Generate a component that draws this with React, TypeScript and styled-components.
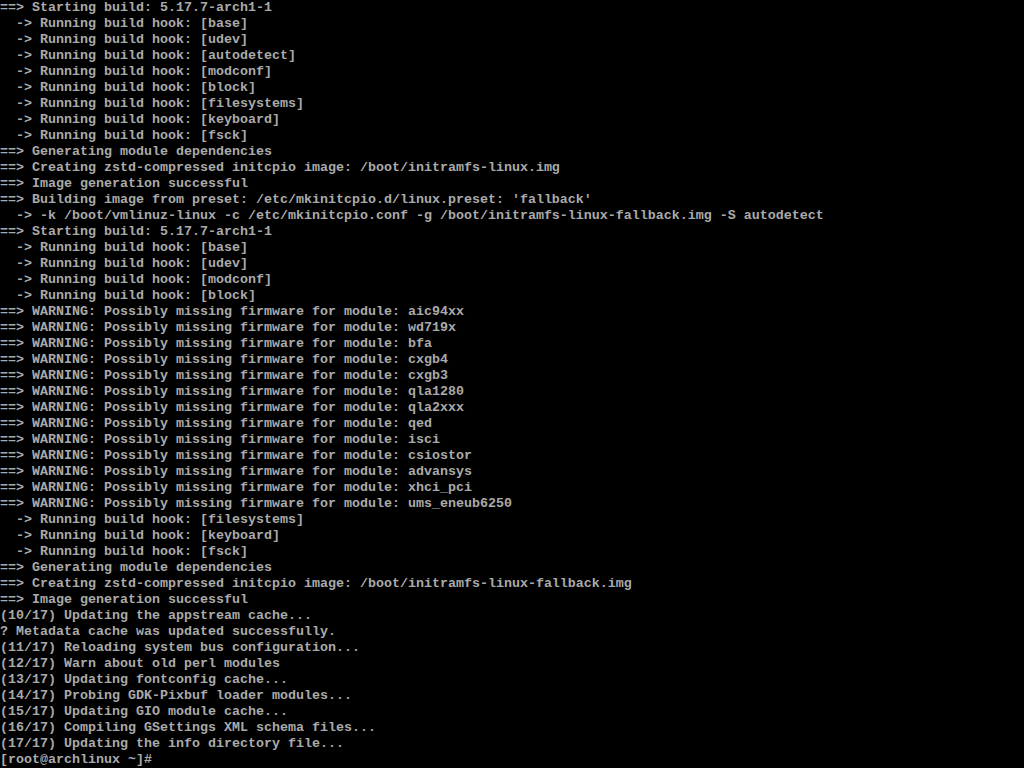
import React from "react";
import styled, { createGlobalStyle } from "styled-components";

const Global = createGlobalStyle`
  html, body { margin: 0; padding: 0; background: #000; }
  body { overflow: hidden; }
`;

const Screen = styled.div`
  width: 1024px;
  height: 768px;
  background: #000;
  display: flex;
  flex-direction: column;
  overflow: hidden;
`;

const Line = styled.div`
  height: 16px;
  line-height: 16px;
  font-family: "Liberation Mono", "DejaVu Sans Mono", monospace;
  font-size: 13.333px;
  font-weight: bold;
  color: #aaaaaa;
  white-space: pre;
`;

const lines = [
  "==> Starting build: 5.17.7-arch1-1",
  "  -> Running build hook: [base]",
  "  -> Running build hook: [udev]",
  "  -> Running build hook: [autodetect]",
  "  -> Running build hook: [modconf]",
  "  -> Running build hook: [block]",
  "  -> Running build hook: [filesystems]",
  "  -> Running build hook: [keyboard]",
  "  -> Running build hook: [fsck]",
  "==> Generating module dependencies",
  "==> Creating zstd-compressed initcpio image: /boot/initramfs-linux.img",
  "==> Image generation successful",
  "==> Building image from preset: /etc/mkinitcpio.d/linux.preset: 'fallback'",
  "  -> -k /boot/vmlinuz-linux -c /etc/mkinitcpio.conf -g /boot/initramfs-linux-fallback.img -S autodetect",
  "==> Starting build: 5.17.7-arch1-1",
  "  -> Running build hook: [base]",
  "  -> Running build hook: [udev]",
  "  -> Running build hook: [modconf]",
  "  -> Running build hook: [block]",
  "==> WARNING: Possibly missing firmware for module: aic94xx",
  "==> WARNING: Possibly missing firmware for module: wd719x",
  "==> WARNING: Possibly missing firmware for module: bfa",
  "==> WARNING: Possibly missing firmware for module: cxgb4",
  "==> WARNING: Possibly missing firmware for module: cxgb3",
  "==> WARNING: Possibly missing firmware for module: qla1280",
  "==> WARNING: Possibly missing firmware for module: qla2xxx",
  "==> WARNING: Possibly missing firmware for module: qed",
  "==> WARNING: Possibly missing firmware for module: isci",
  "==> WARNING: Possibly missing firmware for module: csiostor",
  "==> WARNING: Possibly missing firmware for module: advansys",
  "==> WARNING: Possibly missing firmware for module: xhci_pci",
  "==> WARNING: Possibly missing firmware for module: ums_eneub6250",
  "  -> Running build hook: [filesystems]",
  "  -> Running build hook: [keyboard]",
  "  -> Running build hook: [fsck]",
  "==> Generating module dependencies",
  "==> Creating zstd-compressed initcpio image: /boot/initramfs-linux-fallback.img",
  "==> Image generation successful",
  "(10/17) Updating the appstream cache...",
  "? Metadata cache was updated successfully.",
  "(11/17) Reloading system bus configuration...",
  "(12/17) Warn about old perl modules",
  "(13/17) Updating fontconfig cache...",
  "(14/17) Probing GDK-Pixbuf loader modules...",
  "(15/17) Updating GIO module cache...",
  "(16/17) Compiling GSettings XML schema files...",
  "(17/17) Updating the info directory file...",
  "[root@archlinux ~]#",
];

export default function App() {
  return (
    <>
      <Global />
      <Screen>
        {lines.map((l, i) => (
          <Line key={i}>{l}</Line>
        ))}
      </Screen>
    </>
  );
}
